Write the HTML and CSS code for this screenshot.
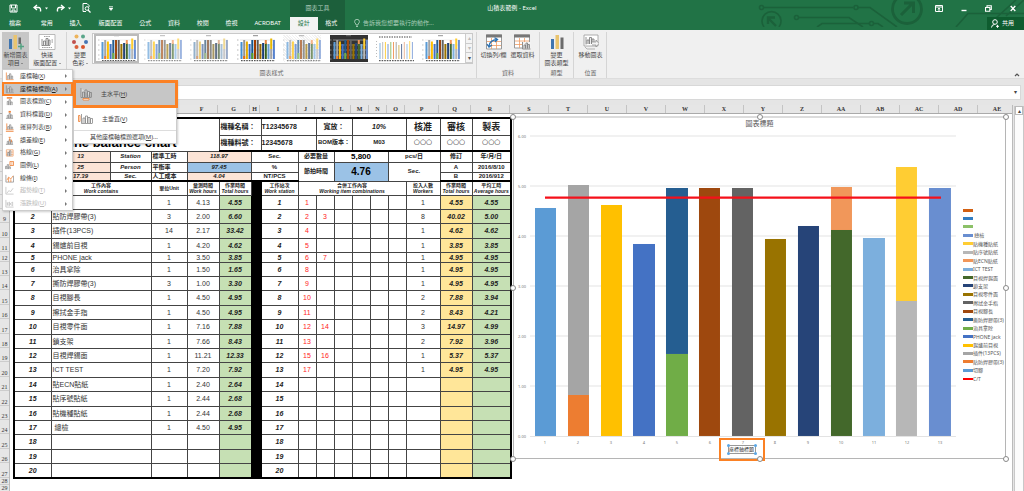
FILE: index.html
```html
<!DOCTYPE html>
<html lang="zh-Hant">
<head>
<meta charset="utf-8">
<meta name="viewport" content="width=device-width, initial-scale=1">
<title>山積表範例 - Excel</title>
<link rel="stylesheet" href="styles.css">
</head>
<body>
<svg class="defs" aria-hidden="true">
  <symbol id="mini" viewBox="0 0 38 27">
    <path d="M3 5H38M3 10H38M3 15H38M3 20H38" stroke="#ddd" stroke-width=".5"/>
    <path d="M16 .7h5" stroke="#777" stroke-width=".8"/>
    <path d="M0 5h1.5M0 10h1.5M0 15h1.5M0 20h1.5M0 24h1.5" stroke="#aaa" stroke-width=".7"/>
    <g stroke-width="2">
      <path d="M4.5 24V7" stroke="#5b9bd5"/><path d="M7.2 24V5" stroke="#a5a5a5"/><path d="M7.2 24V21" stroke="#ed7d31"/>
      <path d="M9.9 24V6.500" stroke="#ffc000"/><path d="M12.600 24V9" stroke="#4472c4"/><path d="M15.300 24V5" stroke="#255e91"/><path d="M15.300 24V18" stroke="#70ad47"/>
      <path d="M18 24V5" stroke="#9e480e"/><path d="M20.700 24V5" stroke="#636363"/><path d="M23.400 24V9" stroke="#997300"/><path d="M26.100 24V8" stroke="#264478"/>
      <path d="M28.800 24V8" stroke="#43682b"/><path d="M28.800 9V5" stroke="#f1975a"/><path d="M31.500 24V9" stroke="#7cafdd"/><path d="M34.200 24V14" stroke="#b7b7b7"/><path d="M34.200 14V3.500" stroke="#ffcd33"/><path d="M36.900 24V5" stroke="#698ed0"/>
    </g>
    <path d="M4 25.700H38" stroke="#333" stroke-width="1" stroke-dasharray="1.600 1"/>
  </symbol>
  <symbol id="mini-thin" viewBox="0 0 38 27">
    <path d="M3 2H36" stroke="#444" stroke-width="1" stroke-dasharray="1.500 1"/>
    <path d="M.5 6V24" stroke="#bbb" stroke-dasharray="1 2"/>
    <g stroke-width="1" opacity=".75">
      <path d="M4 24V8" stroke="#5b9bd5"/><path d="M6.700 24V7" stroke="#a5a5a5"/><path d="M9.400 24V7" stroke="#ffc000"/><path d="M12 24V9" stroke="#4472c4"/><path d="M14.800 24V7" stroke="#70ad47"/><path d="M17.500 24V7" stroke="#ed7d31"/><path d="M20.200 24V7" stroke="#888"/><path d="M22.900 24V10" stroke="#c9a227"/><path d="M25.600 24V9" stroke="#264478"/><path d="M28.300 24V7" stroke="#e3a07a"/><path d="M31 24V9" stroke="#7cafdd"/><path d="M33.700 24V6" stroke="#ffcd33"/><path d="M36.400 24V7" stroke="#698ed0"/>
    </g>
    <path d="M3 25.700H38" stroke="#333" stroke-width="1" stroke-dasharray="1.600 1"/>
  </symbol>
  <symbol id="cols" viewBox="0 0 10 10">
    <path d="M1.500 .5V8.500H9.500" fill="none" stroke="currentColor" stroke-width=".8"/>
    <path d="M3 8V4H4.500V8M5 8V2H6.500V8M7 8V4.500H8.500V8" fill="#fff" stroke="#777" stroke-width=".7"/>
  </symbol>
</svg>

<header class="top">
  <svg class="circuit" viewBox="0 0 280 27" aria-hidden="true">
    <g fill="none" stroke="#1b613a" stroke-width="1.600">
      <circle cx="17.500" cy="7.500" r="2"/><path d="M20 7.500H109"/><circle cx="112" cy="7.500" r="2"/><path d="M114 7.500H126L153 27"/>
      <circle cx="52.500" cy="17.500" r="2"/><path d="M55 17.500H105L119 27"/>
      <path d="M73 27L78 23.500H125"/><circle cx="127.500" cy="23.500" r="2"/><path d="M130 23.500H134L139 27"/>
      <path d="M20 27A9.500 9.500 0 1 1 35 27"/><path d="M32 26L24 18M24 24V17.500H31" stroke-width="2.400"/>
      <circle cx="163" cy="9" r="14.500" stroke-width="2.800"/><path d="M157 15L169 3M160 3H169.500V13" stroke-width="3"/>
      <path d="M212 27L224 13.500H280M252 18L272 0M262 16L280 0"/>
    </g>
  </svg>
  <div class="top-left">
    <div class="quick">
      <svg width="9" height="9" viewBox="0 0 9 9"><path d="M1 1H8V8H1ZM2.500 1V4H6.500V1M3 8V6H6V8" fill="none" stroke="#fff"/></svg>
      <svg class="undo" width="15" height="9" viewBox="0 0 15 9"><path d="M4 1L1 3.500L4 6M1.500 3.500H5.500Q8 3.500 7.500 7.500" fill="none" stroke="#fff" stroke-width="1.400"/><path d="M12 3.500h3l-1.500 2z" fill="#fff"/></svg>
      <svg class="redo" width="15" height="9" viewBox="0 0 15 9"><path d="M5 1L8 3.500L5 6M7.500 3.500H3.500Q1 3.500 1.500 7.500" fill="none" stroke="#fff" stroke-width="1.400"/><path d="M12 3.500h3l-1.500 2z" fill="#fff"/></svg>
      <svg class="preview" width="9" height="10" viewBox="0 0 9 10"><path d="M4 8.500H1V.5H5L7 2.500V4" fill="none" stroke="#fff"/><circle cx="5" cy="5.500" r="1.800" fill="none" stroke="#fff"/><path d="M6 7L8.500 9.500" stroke="#fff" stroke-width="1.300"/></svg>
      <svg class="more" width="4" height="5" viewBox="0 0 4 5"><path d="M0 .5H4M0 2h4l-2 2.500z" stroke="#fff" stroke-width=".6" fill="#fff"/></svg>
    </div>
    <nav class="tabs">
      <a class="file" href="#">檔案</a><a href="#">常用</a><a href="#">插入</a><a href="#">版面配置</a><a href="#">公式</a><a href="#">資料</a><a href="#">校閱</a><a href="#">檢視</a><a href="#">ACROBAT</a>
    </nav>
  </div>
  <div class="context">
    <p>圖表工具</p>
    <nav><a class="active" href="#">設計</a><a href="#">格式</a></nav>
  </div>
  <div class="top-right">
    <div class="title-row">
      <h1>山積表範例 - Excel</h1>
      <div class="controls">
        <button aria-label="功能區顯示選項"><svg width="8" height="7" viewBox="0 0 8 7"><path d="M.5 .5H7.500V6.500H.5ZM.5 2H7.500M4 6V3.200M2.800 4.300L4 3.200L5.200 4.300" fill="none" stroke="#fff"/></svg></button>
        <button aria-label="最小化"><svg width="6" height="7" viewBox="0 0 6 7"><path d="M.5 5.500H5.500" stroke="#fff" stroke-width="1.400"/></svg></button>
        <button aria-label="還原"><svg width="7" height="7" viewBox="0 0 7 7"><path d="M.5 2.500H4.800V6.300H.5ZM2 2.300V.8H6.300V4.500H5" fill="none" stroke="#fff" stroke-width="1.100"/></svg></button>
        <button aria-label="關閉"><svg width="6" height="7" viewBox="0 0 6 7"><path d="M.7 1L5.300 6M5.300 1L.7 6" stroke="#fff" stroke-width="1.300"/></svg></button>
      </div>
    </div>
    <div class="tell-row">
      <a class="tell" href="#"><svg width="6" height="9" viewBox="0 0 6 9"><path d="M2 6V5Q.6 4 .6 2.700A2.400 2.400 0 0 1 5.400 2.700Q5.400 4 4 5V6ZM2 7.500H4" fill="none" stroke="#a9cdb8" stroke-width=".9"/></svg>告訴我您想要執行的動作...</a>
      <button class="share"><svg width="8" height="9" viewBox="0 0 8 9"><circle cx="4" cy="3" r="2.300" fill="none" stroke="#fff"/><path d="M.5 8.500Q.8 5.500 3.500 5.500M5 7.300H8M6.500 5.800V8.800" fill="none" stroke="#fff"/></svg>共用</button>
    </div>
  </div>
</header>

<section class="ribbon">
  <div class="group">
    <div class="tools">
      <button class="tool on">
        <svg width="16" height="16" viewBox="0 0 16 16"><path d="M1 5H4V15H1Z" fill="#3f75b0"/><path d="M5.500 1H9V15H5.500Z" fill="#e9c46f"/><path d="M10.500 3.500H13V10H10.500Z" fill="#6b6b6b"/><path d="M13 9.500V15.500M10 12.500H16" stroke="#54a383" stroke-width="1.500"/></svg>
        <span>新增圖表<br>項目 <i></i></span>
      </button>
      <button class="tool wide">
        <svg width="18" height="16" viewBox="0 0 18 16"><path d="M1 .5H17V15.500H1Z" fill="#fff" stroke="#aaa" stroke-width=".8"/><path d="M6 2.500H12M4 13.500H14" stroke="#777" stroke-width=".7" stroke-dasharray="1.500 .7"/><path d="M4 12V5M4 11.500H12M5.500 11V7H7.500V11M8 11V4.500H10V11M10.500 11V6H12V11M13.500 6H15M13.500 8H15" fill="#eee" stroke="#777" stroke-width=".8"/></svg>
        <span>快速<br>版面配置 <i></i></span>
      </button>
    </div>
  </div>
  <div class="group styles">
    <div class="tools">
      <button class="tool slim">
        <svg width="16" height="16" viewBox="0 0 16 16"><circle cx="4.500" cy="2.500" r="2" fill="#edb45c"/><circle cx="11" cy="2.500" r="2" fill="#5aa68a"/><circle cx="2" cy="8" r="2" fill="#c0504d"/><circle cx="14" cy="8" r="2" fill="#4676b5"/><circle cx="4.500" cy="13" r="2" fill="#d9603a"/><circle cx="11" cy="13" r="2" fill="#d9552c"/></svg>
        <span>變更<br>色彩 <i></i></span>
      </button>
      <div class="gallery">
        <button class="thumb picked" aria-label="樣式 1"><svg><use href="#mini"/></svg></button>
        <button class="thumb light" aria-label="樣式 2"><svg><use href="#mini"/></svg></button>
        <button class="thumb muted" aria-label="樣式 3"><svg><use href="#mini"/></svg></button>
        <button class="thumb vivid" aria-label="樣式 4"><svg><use href="#mini"/></svg></button>
        <button class="thumb hatch" aria-label="樣式 5"><svg><use href="#mini"/></svg></button>
        <button class="thumb dark" aria-label="樣式 6"><svg><use href="#mini"/></svg></button>
        <button class="thumb" aria-label="樣式 7"><svg><use href="#mini-thin"/></svg></button>
        <button class="thumb" aria-label="樣式 8"><svg><use href="#mini"/></svg></button>
        <div class="spin"><button aria-label="上" disabled>▴</button><button aria-label="下" disabled>▾</button><button aria-label="更多">▾</button></div>
      </div>
    </div>
    <p>圖表樣式</p>
  </div>
  <div class="group">
    <div class="tools">
      <button class="tool">
        <svg width="16" height="16" viewBox="0 0 16 16"><path d="M.5 1H15.500V15H.5Z" fill="#fff" stroke="#999"/><path d="M0 .5H16V3.500H0Z" fill="#777"/><path d="M5.500 4V15M10.500 4V15M1 7.500H15M1 11.500H15" stroke="#ef9c63" stroke-width=".8"/><path d="M3 12Q4 6 11 5.500M8.500 3.800L11.500 5.500L9 8M1 10L3 13L6 11" fill="none" stroke="#2e75b6" stroke-width="1.300"/></svg>
        <span>切換列/欄</span>
      </button>
      <button class="tool">
        <svg width="17" height="16" viewBox="0 0 17 16"><path d="M.5 1H15.500V14H.5Z" fill="#fff" stroke="#999"/><path d="M0 .5H16V3.500H0Z" fill="#777"/><path d="M5.500 4V14M10.500 4V14M1 7H15M1 10.500H15" stroke="#ef9c63" stroke-width=".8"/><path d="M8 8H16.500V15.500H8Z" fill="#f4f4f4"/><path d="M8.500 15V8M8.500 15H16.500M10 14.500V11H11.500V14.500M12 14.500V9H13.500V14.500M14 14.500V10.500H15.500V14.500" fill="#fff" stroke="#777" stroke-width=".8"/></svg>
        <span>選取資料</span>
      </button>
    </div>
    <p>資料</p>
  </div>
  <div class="group">
    <div class="tools">
      <button class="tool">
        <svg width="14" height="16" viewBox="0 0 14 16"><path d="M1 5H4V15H1Z" fill="#3f75b0"/><path d="M5.500 1H9V15H5.500Z" fill="#e9c46f"/><path d="M10.500 3.500H13.500V15H10.500Z" fill="#6b6b6b"/></svg>
        <span>變更<br>圖表類型</span>
      </button>
    </div>
    <p>類型</p>
  </div>
  <div class="group last">
    <div class="tools">
      <button class="tool">
        <svg width="16" height="16" viewBox="0 0 16 16"><path d="M1 1H15V12H1Z" fill="#fff" stroke="#999" stroke-width=".8"/><path d="M3 10.500V3M4 10V6H6V10M6.500 10V3.500H8.500V10M9 10V5H11V10" fill="#eee" stroke="#777" stroke-width=".8"/><path d="M9 8H13V6L16 9.500L13 13V11H9" fill="#f4f4f4" stroke="#888" stroke-width=".7"/><path d="M2 13L4 15H12" fill="none" stroke="#999" stroke-width=".7"/></svg>
        <span>移動圖表</span>
      </button>
    </div>
    <p>位置</p>
  </div>
  <button class="collapse" aria-label="摺疊功能區"><svg width="6" height="5" viewBox="0 0 6 5"><path d="M1 4L3 2L5 4" fill="none" stroke="#555" stroke-width="1.200"/></svg></button>
</section>

<div class="formula"><input aria-label="資料編輯列"><span>▾</span></div>

<div class="book">
<div class="sheet">
  <div class="letters">
    <div class="fixed"><span class="w13"></span><span class="w37"></span><span class="w100"></span><span class="w36"></span><span class="w32">F</span><span class="w32">G</span><span class="w10">H</span><span class="w37">I</span><span class="w18">J</span><span class="w18">K</span><span class="w18">L</span><span class="w18">M</span><span class="w18">N</span><span class="w18">O</span><span class="w34">P</span><span class="w32">Q</span><span class="w39">R</span></div>
    <div class="rest"><span>S</span><span>T</span><span>U</span><span>V</span><span>W</span><span>X</span><span>Y</span><span>Z</span><span>AA</span><span>AB</span><span>AC</span><span>AD</span><span>AE</span></div>
  </div>
  <div class="canvas">
    <ol class="rows">
      <li class="h17"></li><li class="h16"></li><li class="h11"></li><li class="h10"></li><li class="h9"></li><li></li>
      <li></li><li>9</li><li class="h15">10</li><li>11</li><li class="h10">12</li><li>13</li><li>14</li><li class="h15">15</li><li>16</li><li class="h15">17</li><li>18</li><li>19</li><li class="h15">20</li><li>21</li><li class="h15">22</li><li>23</li><li>24</li><li class="h15">25</li><li>26</li><li class="h15">27</li><li class="h7">28</li><li class="h7">29</li>
    </ol>
    <table class="grid">
      <colgroup><col class="w37"><col class="w59"><col class="w41"><col class="w36"><col class="w32"><col class="w32"><col class="w10"><col class="w37"><col class="w18"><col class="w18"><col class="w18"><col class="w18"><col class="w18"><col class="w18"><col class="w34"><col class="w32"><col class="w39"></colgroup>
      <thead>
        <tr class="h17"><th class="name" colspan="5" rowspan="2">Line balance chart</th><th class="lab" colspan="2">機種名稱：</th><th class="val" colspan="2">T12345678</th><th colspan="2">寬放：</th><th class="it" colspan="3">10%</th><th class="big">核准</th><th class="big">審核</th><th class="big">製表</th></tr>
        <tr class="h16 thick"><th class="lab" colspan="2">機種料號：</th><th class="val" colspan="2">12345678</th><th class="bom" colspan="2">BOM版本：</th><th class="m03" colspan="3">M03</th><td class="circles">○○○</td><td class="circles">○○○</td><td class="circles">○○○</td></tr>
        <tr class="h11 small"><th></th><th class="pink it">13</th><th class="it">Station</th><th class="left">標準工時</th><th class="pink it" colspan="2">118.97</th><th colspan="2">Sec.</th><th colspan="2">必要數量</th><th class="qty" colspan="3">5,800</th><th colspan="2">pcs/日</th><th>修訂</th><th>年/月/日</th></tr>
        <tr class="h10 small"><th></th><th class="pink it">25</th><th class="it">Person</th><th class="left">平衡率</th><th class="blue it" colspan="2">97.45</th><th colspan="2">%</th><th colspan="2" rowspan="2">節拍時間</th><th class="blue takt" colspan="3" rowspan="2">4.76</th><th colspan="2" rowspan="2">Sec.</th><th>A</th><th>2016/8/10</th></tr>
        <tr class="h9 small thick"><th></th><th class="pink it">17.39</th><th class="it">Sec.</th><th class="left">人工成本</th><th class="pink it" colspan="2">4.04</th><th colspan="2">NT/PCS</th><th>B</th><th>2016/912</th></tr>
      </thead>
      <tbody>
        <tr class="heads"><th></th><th colspan="2">工作內容<br><em>Work contains</em></th><th>單位Unit</th><th>量測時間<br><em>Work hours</em></th><th>作業時間<br><em>Total hours</em></th><td class="black" rowspan="21"></td><th>工作站次<br><em>Work station</em></th><th colspan="6">合併工作內容<br><em>Working item combinations</em></th><th>投入人數<br><em>Workers</em></th><th>作業時間<br><em>Total hours</em></th><th>平均工時<br><em>Average hours</em></th></tr>
        <tr><th></th><td class="work" colspan="2"></td><td>1</td><td>4.13</td><td class="g">4.55</td><th>1</th><td class="r">1</td><td></td><td></td><td></td><td></td><td></td><td>1</td><td class="y">4.55</td><td class="g">4.55</td></tr>
        <tr><th>2</th><td class="work" colspan="2">貼防焊膠帶(3)</td><td>3</td><td>2.00</td><td class="g">6.60</td><th>2</th><td class="r">2</td><td class="r">3</td><td></td><td></td><td></td><td></td><td>8</td><td class="y">40.02</td><td class="g">5.00</td></tr>
        <tr><th>3</th><td class="work" colspan="2">插件(13PCS)</td><td>14</td><td>2.17</td><td class="g">33.42</td><th>3</th><td class="r">4</td><td></td><td></td><td></td><td></td><td></td><td>1</td><td class="y">4.62</td><td class="g">4.62</td></tr>
        <tr><th>4</th><td class="work" colspan="2">錫爐前目視</td><td>1</td><td>4.20</td><td class="g">4.62</td><th>4</th><td class="r">5</td><td></td><td></td><td></td><td></td><td></td><td>1</td><td class="y">3.85</td><td class="g">3.85</td></tr>
        <tr class="short"><th>5</th><td class="work" colspan="2">PHONE jack</td><td>1</td><td>3.50</td><td class="g">3.85</td><th>5</th><td class="r">6</td><td class="r">7</td><td></td><td></td><td></td><td></td><td>1</td><td class="y">4.95</td><td class="g">4.95</td></tr>
        <tr><th>6</th><td class="work" colspan="2">治具拿除</td><td>1</td><td>1.50</td><td class="g">1.65</td><th>6</th><td class="r">8</td><td></td><td></td><td></td><td></td><td></td><td>1</td><td class="y">4.95</td><td class="g">4.95</td></tr>
        <tr><th>7</th><td class="work" colspan="2">撕防焊膠帶(3)</td><td>3</td><td>1.00</td><td class="g">3.30</td><th>7</th><td class="r">9</td><td></td><td></td><td></td><td></td><td></td><td>1</td><td class="y">4.95</td><td class="g">4.95</td></tr>
        <tr><th>8</th><td class="work" colspan="2">目視腳長</td><td>1</td><td>4.50</td><td class="g">4.95</td><th>8</th><td class="r">10</td><td></td><td></td><td></td><td></td><td></td><td>2</td><td class="y">7.88</td><td class="g">3.94</td></tr>
        <tr><th>9</th><td class="work" colspan="2">擦拭金手指</td><td>1</td><td>4.50</td><td class="g">4.95</td><th>9</th><td class="r">11</td><td></td><td></td><td></td><td></td><td></td><td>2</td><td class="y">8.43</td><td class="g">4.21</td></tr>
        <tr><th>10</th><td class="work" colspan="2">目視零件面</td><td>1</td><td>7.16</td><td class="g">7.88</td><th>10</th><td class="r">12</td><td class="r">14</td><td></td><td></td><td></td><td></td><td>3</td><td class="y">14.97</td><td class="g">4.99</td></tr>
        <tr><th>11</th><td class="work" colspan="2">鎖支架</td><td>1</td><td>7.66</td><td class="g">8.43</td><th>11</th><td class="r">13</td><td></td><td></td><td></td><td></td><td></td><td>2</td><td class="y">7.92</td><td class="g">3.96</td></tr>
        <tr><th>12</th><td class="work" colspan="2">目視焊錫面</td><td>1</td><td>11.21</td><td class="g">12.33</td><th>12</th><td class="r">15</td><td class="r">16</td><td></td><td></td><td></td><td></td><td>1</td><td class="y">5.37</td><td class="g">5.37</td></tr>
        <tr><th>13</th><td class="work" colspan="2">ICT TEST</td><td>1</td><td>7.20</td><td class="g">7.92</td><th>13</th><td class="r">17</td><td></td><td></td><td></td><td></td><td></td><td>1</td><td class="y">4.95</td><td class="g">4.95</td></tr>
        <tr><th>14</th><td class="work" colspan="2">貼ECN貼紙</td><td>1</td><td>2.40</td><td class="g">2.64</td><th>14</th><td></td><td></td><td></td><td></td><td></td><td></td><td></td><td class="y"></td><td class="g"></td></tr>
        <tr><th>15</th><td class="work" colspan="2">貼序號貼紙</td><td>1</td><td>2.44</td><td class="g">2.68</td><th>15</th><td></td><td></td><td></td><td></td><td></td><td></td><td></td><td class="y"></td><td class="g"></td></tr>
        <tr><th>16</th><td class="work" colspan="2">貼機種貼紙</td><td>1</td><td>2.44</td><td class="g">2.68</td><th>16</th><td></td><td></td><td></td><td></td><td></td><td></td><td></td><td class="y"></td><td class="g"></td></tr>
        <tr><th>17</th><td class="work" colspan="2">&nbsp;總檢</td><td>1</td><td>4.50</td><td class="g">4.95</td><th>17</th><td></td><td></td><td></td><td></td><td></td><td></td><td></td><td class="y"></td><td class="g"></td></tr>
        <tr><th>18</th><td colspan="2"></td><td></td><td></td><td class="g"></td><th>18</th><td></td><td></td><td></td><td></td><td></td><td></td><td></td><td class="y"></td><td class="g"></td></tr>
        <tr><th>19</th><td colspan="2"></td><td></td><td></td><td class="g"></td><th>19</th><td></td><td></td><td></td><td></td><td></td><td></td><td></td><td class="y"></td><td class="g"></td></tr>
        <tr><th>20</th><td colspan="2"></td><td></td><td></td><td class="g"></td><th>20</th><td></td><td></td><td></td><td></td><td></td><td></td><td></td><td class="y"></td><td class="g"></td></tr>
      </tbody>
    </table>

    <figure class="chart">
      <h2>圖表標題</h2>
      <div class="chart-body">
        <div class="plot">
          <svg viewBox="0 0 446 315" role="img" aria-label="各站平均工時">
            <path d="M16 6H442M16 56H442M16 106H442M16 156H442M16 206H442M16 256H442M16 306.500H442" stroke="#e3e3e3"/>
            <g class="axis" text-anchor="end"><text x="12" y="8">6.00</text><text x="12" y="58">5.00</text><text x="12" y="108">4.00</text><text x="12" y="158">3.00</text><text x="12" y="208">2.00</text><text x="12" y="258">1.00</text><text x="12" y="308">0.00</text></g>
            <g>
              <rect x="21" y="78" width="21" height="228" fill="#5b9bd5"/>
              <rect x="54" y="55" width="21" height="210" fill="#a5a5a5"/><rect x="54" y="265" width="21" height="41" fill="#ed7d31"/>
              <rect x="87" y="75" width="21" height="231" fill="#ffc000"/>
              <rect x="119" y="114" width="22" height="192" fill="#4472c4"/>
              <rect x="152" y="58" width="22" height="166" fill="#255e91"/><rect x="152" y="224" width="22" height="82" fill="#70ad47"/>
              <rect x="185" y="58" width="21" height="248" fill="#9e480e"/>
              <rect x="218" y="58" width="21" height="248" fill="#636363"/>
              <rect x="251" y="109" width="21" height="197" fill="#997300"/>
              <rect x="284" y="96" width="21" height="210" fill="#264478"/>
              <rect x="317" y="57" width="21" height="43" fill="#f1975a"/><rect x="317" y="100" width="21" height="206" fill="#43682b"/>
              <rect x="349" y="108" width="22" height="198" fill="#7cafdd"/>
              <rect x="382" y="37" width="21" height="135" fill="#ffcd33"/><rect x="382" y="171" width="21" height="135" fill="#b7b7b7"/>
              <rect x="415" y="58" width="22" height="248" fill="#698ed0"/>
            </g>
            <path d="M31 67.700H427" stroke="#f5101a" stroke-width="2.200"/>
            <g class="axis" text-anchor="middle"><text x="31" y="314">1</text><text x="64" y="314">2</text><text x="97" y="314">3</text><text x="130" y="314">4</text><text x="163" y="314">5</text><text x="196" y="314">6</text><text x="229" y="314">7</text><text x="261" y="314">8</text><text x="294" y="314">9</text><text x="327" y="314">10</text><text x="360" y="314">11</text><text x="393" y="314">12</text><text x="426" y="314">13</text></g>
          </svg>
          <div class="axis-row"><div class="axis-title">座標軸標題<i class="tl"></i><i class="tr"></i><i class="bl"></i><i class="br"></i></div></div>
        </div>
        <ul class="legend">
          <li><i style="background:#d26012"></i></li><li><i style="background:#327dc2"></i></li><li><i style="background:#8cc168"></i></li>
          <li><i style="background:#698ed0"></i>&nbsp;總檢</li><li><i style="background:#ffcd33"></i>貼機種貼紙</li><li><i style="background:#b7b7b7"></i>貼序號貼紙</li><li><i style="background:#f1975a"></i>貼ECN貼紙</li><li><i style="background:#7cafdd"></i>ICT TEST</li><li><i style="background:#43682b"></i>目視焊錫面</li><li><i style="background:#264478"></i>鎖支架</li><li><i style="background:#997300"></i>目視零件面</li><li><i style="background:#636363"></i>擦拭金手指</li><li><i style="background:#9e480e"></i>目視腳長</li><li><i style="background:#255e91"></i>撕防焊膠帶(3)</li><li><i style="background:#70ad47"></i>治具拿除</li><li><i style="background:#4472c4"></i>PHONE jack</li><li><i style="background:#ffc000"></i>錫爐前目視</li><li><i style="background:#a5a5a5"></i>插件(13PCS)</li><li><i style="background:#ed7d31"></i>貼防焊膠帶(3)</li><li><i style="background:#5b9bd5"></i>切腳</li><li><i class="line"></i>C/T</li>
        </ul>
      </div>
      <b class="n w"></b><b class="n c"></b><b class="n e"></b><b class="m w"></b><b class="m e"></b><b class="s w"></b><b class="s c"></b><b class="s e"></b>
    </figure>
  </div>
</div>
<div class="scroll"><button aria-label="向上捲動">▴</button><div></div></div>
</div>

<ul class="menu">
  <li><button><svg class="ico"><use href="#cols"/></svg>座標軸(<u>X</u>)<s></s></button></li>
  <li><button class="open"><svg class="ico grey"><use href="#cols"/></svg>座標軸標題(<u>A</u>)<s></s></button></li>
  <li><button><svg class="ico" viewBox="0 0 10 10"><path d="M2 1H8" stroke="#ed7d31" stroke-width="1.600"/><path d="M2.500 9V5H4V9M4.500 9V3H6V9M6.500 9V5.500H8V9" fill="#fff" stroke="#777" stroke-width=".7"/></svg>圖表標題(<u>C</u>)<s></s></button></li>
  <li><button><svg class="ico" viewBox="0 0 10 10"><path d="M4 1H6.500V3H4Z" fill="#ed7d31"/><path d="M2.500 9V6H4V9M4.500 9V4H6V9M6.500 9V5.500H8V9M1 9.300H9" fill="#fff" stroke="#777" stroke-width=".7"/></svg>資料標籤(<u>D</u>)<s></s></button></li>
  <li><button><svg class="ico" viewBox="0 0 10 10"><path d="M2 .5V7M1 7.500H9.500M1 9.300H9.500" stroke="#ed7d31" stroke-width=".9"/><path d="M3 7V4H4.500V7M5 7V2H6.500V7M7 7V4.500H8.500V7" fill="#fff" stroke="#777" stroke-width=".7"/></svg>運算列表(<u>B</u>)<s></s></button></li>
  <li><button><svg class="ico" viewBox="0 0 10 10"><path d="M2.500 9V6H4V9M4.500 9V4H6V9M6.500 9V5.500H8V9M1 9.300H9" fill="#fff" stroke="#777" stroke-width=".7"/><path d="M5.200 1.500V6M4 1.500H6.400M7.200 4V7" stroke="#ed7d31" stroke-width=".8"/></svg>誤差線(<u>E</u>)<s></s></button></li>
  <li><button><svg class="ico" viewBox="0 0 10 10"><path d="M1.500 2H9M1.500 4.500H9M1.500 7H9M1.500 2V9H9V2" fill="none" stroke="#ed9a62" stroke-width=".8"/><path d="M3 9V5H4.500V9M5 9V3H6.500V9" fill="#eee" stroke="#777" stroke-width=".7"/></svg>格線(<u>G</u>)<s></s></button></li>
  <li><button><svg class="ico" viewBox="0 0 10 10"><path d="M5.500 .5H9.500V5H5.500Z" fill="#fff" stroke="#ed7d31" stroke-width=".9"/><path d="M6.500 2H8.500M6.500 3.500H8.500" stroke="#ed7d31" stroke-width=".6"/><path d="M.5 9V6H2V9M2.500 9V4H4V9M4.500 9V6.500H6V9" fill="#fff" stroke="#777" stroke-width=".7"/></svg>圖例(<u>L</u>)<s></s></button></li>
  <li><button><svg class="ico" viewBox="0 0 10 10"><path d="M1 1V9H9.500V2" fill="none" stroke="#777" stroke-width=".7"/><path d="M2 7L4 3.500L6.500 5.500L9 2M4 4V9M6.500 6V9" fill="none" stroke="#ed7d31" stroke-width=".8"/></svg>線條(<u>I</u>)<s></s></button></li>
  <li><button disabled><svg class="ico" viewBox="0 0 10 10"><path d="M1 1V9H9.500M2 8L4.500 5L6 6.500L9 2.500" fill="none" stroke="#bbb" stroke-width=".8"/></svg>趨勢線(<u>T</u>)<s></s></button></li>
  <li><button disabled><svg class="ico" viewBox="0 0 10 10"><path d="M1 1V9H9.500M2.500 3.500V7.500M2.500 5.500L5 3.500V7.500ZM5.500 5.500L8.500 3.500V7.500Z" fill="none" stroke="#bbb" stroke-width=".8"/></svg>漲跌線(<u>U</u>)<s></s></button></li>
</ul>

<ul class="submenu">
  <li class="chosen"><button><svg width="12" height="14" viewBox="0 0 12 14"><path d="M1 1V10.500H11.500M2.500 10V5H4.500V10M5 10V3H7V10M7.500 10V4.500H9.500V10M10 10V5.500H11.500V10" fill="#ddd" stroke="#777" stroke-width=".7"/><path d="M3 11.500H9V13H3Z" fill="#fff" stroke="#ed7d31" stroke-width=".8"/></svg><span>主水平(<u>H</u>)</span></button></li>
  <li><button><svg width="15" height="12" viewBox="0 0 15 12"><path d="M.5 2.500H2V8.500H.5Z" fill="#fff" stroke="#ed7d31" stroke-width=".8"/><path d="M3.500 1V10.500H14.500M5 10V5H7V10M7.500 10V3H9.500V10M10 10V4.500H12V10M12.500 10V5.500H14.500V10" fill="#fff" stroke="#777" stroke-width=".7"/></svg><span>主垂直(<u>V</u>)</span></button></li>
  <li class="other"><button>其他座標軸標題選項(<u>M</u>)...</button></li>
</ul>
</body>
</html>
```
FILE: styles.css
```css
* { box-sizing: border-box; }
body {
  margin: 0;
  height: 100vh;
  overflow: hidden;
  display: flex;
  flex-direction: column;
  position: relative;
  background: #e5e5e5;
  color: #444;
  font: 6px/9px "Noto Sans", "Noto Sans CJK TC", sans-serif;
}
button, input { font: inherit; color: inherit; border: 0; padding: 0; margin: 0; background: none; }
a { color: inherit; text-decoration: none; }
p, h1, h2, ul, ol, figure { margin: 0; padding: 0; font: inherit; }
ul, ol { list-style: none; }
svg { display: block; flex: none; }
.defs { position: absolute; width: 0; height: 0; }

/* Title bar and tabs */
.top {
  display: grid;
  grid-template-columns: 290px 55px 1fr;
  height: 30px;
  flex: none;
  position: relative;
  background: #217346;
  color: #fff;
}
.circuit { position: absolute; right: 0; top: 0; width: 280px; height: 27px; }
.top-left, .context, .top-right { display: grid; grid-template-rows: 16px 14px; position: relative; }
.quick { display: flex; align-items: center; padding-left: 9px; }
.undo { margin-left: 15px; }
.redo { margin-left: 8px; }
.preview { margin-left: 11px; }
.more { margin-left: 18px; }
.tabs { display: flex; justify-content: space-between; align-items: center; padding: 0 9px; }
.file { margin-right: 3px; }
.context { background: #1c5f3b; }
.context p { padding-top: 4px; text-align: center; color: #b5cfc0; }
.context nav { display: flex; }
.context a { flex: 1; text-align: center; line-height: 13px; margin-top: 1px; }
.context .active { background: #f3f3f3; color: #217346; }
.title-row { display: grid; align-items: center; }
.title-row h1 { grid-area: 1 / 1; text-align: center; padding-right: 345px; }
.controls { grid-area: 1 / 1; justify-self: end; display: flex; gap: 18px; padding-right: 8px; }
.tell-row { display: flex; justify-content: space-between; align-items: stretch; }
.tell { display: flex; align-items: center; gap: 3px; padding-left: 9px; color: #a9cdb8; }
.share { display: flex; align-items: center; gap: 3px; width: 37px; padding-left: 4px; background: #0e5c2f; height: 13px; margin-top: 1px; }

/* Ribbon */
.ribbon { display: flex; height: 49px; flex: none; background: #f0f0f0; padding: 2px 4px 0 2px; border-bottom: 1px solid #ddd; }
.group { display: flex; flex-direction: column; justify-content: space-between; padding: 0 3px; border-right: 1px solid #d5d5d5; text-align: center; color: #666; }
.group:first-child { padding-left: 0; }
.tools { display: flex; gap: 2px; height: 37px; }
.tool { width: 27px; padding-top: 2px; display: flex; flex-direction: column; align-items: center; gap: 1px; line-height: 8px; white-space: nowrap; color: #444; }
.tool.on { background: #c6c6c6; }
.tool.wide { width: 32px; }
.tool.slim { width: 20px; }
.tool i { display: inline-block; border: 1px solid transparent; border-top-color: #555; border-bottom: 0; vertical-align: middle; }
.gallery { display: flex; width: 381px; height: 31px; margin-top: 1px; padding-left: 1px; background: #fff; border: 1px solid #c9c9c9; gap: 1px; }
.thumb { width: 46px; display: grid; place-items: center; }
.thumb svg { width: 38px; height: 27px; }
.picked { outline: 2px solid #bbb; outline-offset: -2px; }
.light svg { opacity: .65; }
.muted svg { filter: saturate(.6) opacity(.75); }
.vivid svg { filter: saturate(1.3) brightness(.9); }
.hatch svg { opacity: .7; background: repeating-linear-gradient(45deg, #fff 0 1px, #ececec 1px 2px); }
.dark svg { background: #333; }
.spin { display: grid; width: 7px; border-left: 1px solid #ccc; }
.spin button { line-height: 8px; background: #f4f4f4; border-bottom: 1px solid #ccc; color: #555; }
.spin button:disabled { color: #bbb; }
.last { padding-right: 2px; }
.collapse { margin-left: auto; align-self: flex-end; padding-bottom: 1px; }

.formula { display: flex; flex: none; margin: 6px 3px 0 75px; height: 15px; background: #fff; border: 1px solid #d8d8d8; align-items: center; }
.formula input { flex: 1; min-width: 0; }
.formula span { width: 6px; }

/* Worksheet */
.book { flex: 1; min-height: 0; display: flex; margin-top: 5px; }
.sheet { flex: 1; min-width: 0; overflow: hidden; border-right: 1px solid #bbb; background: #fff; }
.letters { display: flex; height: 9px; background: #e6e6e6; border-bottom: 1px solid #aaa; font: bold 6px/9px "Liberation Serif", serif; text-align: center; color: #333; }
.fixed { display: flex; flex: none; }
.rest { display: flex; flex: 1; min-width: 507px; }
.rest span { flex: 1; }
.letters span { border-right: 1px solid #c4c4c4; }
.letters span:empty { border: 0; }
.canvas { display: flex; align-items: flex-start; }
.rows { width: 10px; margin-right: 3px; padding-top: 4px; flex: none; background: #e6e6e6; border-right: 1px solid #bbb; font: 6px/6px "Liberation Serif", serif; text-align: center; color: #333; }
.rows li { height: 14px; display: flex; align-items: flex-end; justify-content: center; border-bottom: 1px solid #ccc; }

.w10 { width: 10px; } .w13 { width: 13px; } .w18 { width: 18px; } .w32 { width: 32px; } .w34 { width: 34px; }
.w36 { width: 36px; } .w37 { width: 37px; } .w39 { width: 39px; } .w41 { width: 41px; } .w59 { width: 59px; } .w100 { width: 100px; }
.rows .h7 { height: 7px; } .rows .h9, .h9 { height: 9px; } .rows .h10, .h10 { height: 10px; } .rows .h11, .h11 { height: 11px; }
.rows .h15 { height: 15px; } .rows .h16, .h16 { height: 16px; } .rows .h17, .h17 { height: 17px; }

.grid { width: 497px; margin-top: 3px; flex: none; table-layout: fixed; border-collapse: collapse; border: 2px solid #000; color: #333; font: 7px/7px "Liberation Sans", "Noto Sans CJK TC", sans-serif; }
.grid th, .grid td { border: 1px solid #444; padding: 0; text-align: center; white-space: nowrap; overflow: hidden; }
.grid thead th { color: #222; }
.grid .thick th, .grid .thick td { border-bottom: 2px solid #000; }
.grid .name { font: bold 13px/14px "Liberation Sans", sans-serif; padding: 17px 42px 0 0; text-align: right; color: #000; }
.grid .lab, .grid .left, .grid .val { text-align: left; }
.grid .lab, .grid .left { padding-left: 1px; }
.grid .big { font-size: 9px; line-height: 10px; }
.grid .bom, .grid .m03, .grid .small th { font-size: 6px; line-height: 7px; }
.grid .circles { font-family: "DejaVu Sans", sans-serif; color: #111; }
.grid .it { font-style: italic; }
.grid .small .qty { font-size: 8px; color: #000; }
.grid .small .takt { font-size: 10px; color: #000; }
.pink { background: #fce4d6; }
.blue { background: #9bc2e6; }
.grid .black { background: #000; border-color: #000; }
.grid tbody tr { height: 14px; }
.grid tbody tr:nth-child(5n+1), .grid tbody tr:nth-child(5n+4) { height: 15px; }
.grid tbody tr.heads { height: 14px; }
.grid tbody tr.short:nth-child(6) { height: 10px; }
.grid tbody th, .grid .g, .grid .y { font-weight: bold; font-style: italic; color: #222; }
.grid .heads th { font-size: 5px; line-height: 6px; font-style: normal; }
.grid .heads em { font-style: italic; }
.grid .g { background: #c6e0b4; }
.grid .y { background: #ffe699; }
.grid .r { color: #f22; }
.grid .work { text-align: left; padding-left: 1px; }

/* Chart */
.chart { flex: 1; min-width: 0; margin: 2px 6px 0 1px; border: 1px solid #b5b5b5; border-top: 2px solid #dcdcdc; position: relative; background: #fff; }
.chart h2 { font-size: 7px; line-height: 12px; text-align: center; color: #555; }
.chart-body { display: flex; }
.plot { flex: 1; min-width: 0; padding-bottom: 4px; }
.plot > svg { width: 100%; height: auto; }
.axis { font-size: 4px; fill: #777; }
.axis-row { display: flex; justify-content: center; padding-left: 9px; }
.axis-title { position: relative; width: 28px; border: 1px solid #999; font-size: 5px; line-height: 7px; text-align: center; white-space: nowrap; color: #333; }
.axis-title::after { content: ""; position: absolute; inset: -8px -10px; border: 2px solid #fb8124; }
.axis-title i { position: absolute; width: 3px; height: 3px; border-radius: 50%; background: #5aa7e6; }
.tl, .tr { top: -2px; } .bl, .br { bottom: -2px; }
.tl, .bl { left: -2px; } .tr, .br { right: -2px; }
.legend { width: 45px; padding-left: 3px; height: 177px; margin-top: 76px; display: flex; flex-direction: column; justify-content: space-between; font-size: 5px; line-height: 8px; color: #555; white-space: nowrap; }
.legend li { display: flex; align-items: center; min-height: 8px; }
.legend i { width: 10px; height: 3px; flex: none; }
.legend .line { height: 2px; background: #f00; }
.chart > b { position: absolute; width: 6px; height: 6px; border: 1px solid #888; border-radius: 50%; background: #fff; }
.chart > .n { top: -4px; } .chart > .m { top: calc(50% - 3px); } .chart > .s { bottom: -4px; }
.chart > .w { left: -4px; width: 6px; } .chart > .c { left: calc(50% - 3px); } .chart > .e { right: -4px; }

.scroll { width: 10px; display: flex; flex-direction: column; border: 1px solid #c8c8c8; border-width: 0 1px; margin: 1px 0 0 1px; }
.scroll button { height: 9px; background: #fff; border: 1px solid #bbb; line-height: 6px; }
.scroll div { flex: 1; background: #fcfcfc; }

/* Drop-down menus */
.menu, .submenu { position: absolute; background: #fff; border: 1px solid #ccc; box-shadow: 1px 1px 2px #0003; }
.menu { left: 2px; top: 69px; width: 71px; height: 142px; display: flex; flex-direction: column; }
.menu li { flex: 1; display: flex; }
.menu button { flex: 1; display: flex; align-items: center; padding: 0 5px 0 2px; color: #444; }
.menu button:disabled { color: #bbb; }
.menu .open { background: #c6c6c6; outline: 2px solid #fb8124; color: #222; outline-offset: -1px; }
.ico { width: 9px; height: 9px; margin-right: 6px; color: #ed7d31; }
.ico.grey { color: #888; }
.menu s { margin-left: auto; border: 2px solid transparent; border-left-color: #777; border-right: 0; }
.submenu { left: 73px; top: 80px; width: 104px; }
.submenu button { display: flex; align-items: center; gap: 9px; width: 100%; height: 22px; padding-left: 4px; color: #444; }
.chosen { margin: -1px -2px 0 -1px; border: 3px solid #fb8124; background: #c6c6c6; }
.submenu .other { border-top: 1px solid #ddd; }
.submenu .other button { height: 12px; padding-left: 16px; gap: 0; }
```
